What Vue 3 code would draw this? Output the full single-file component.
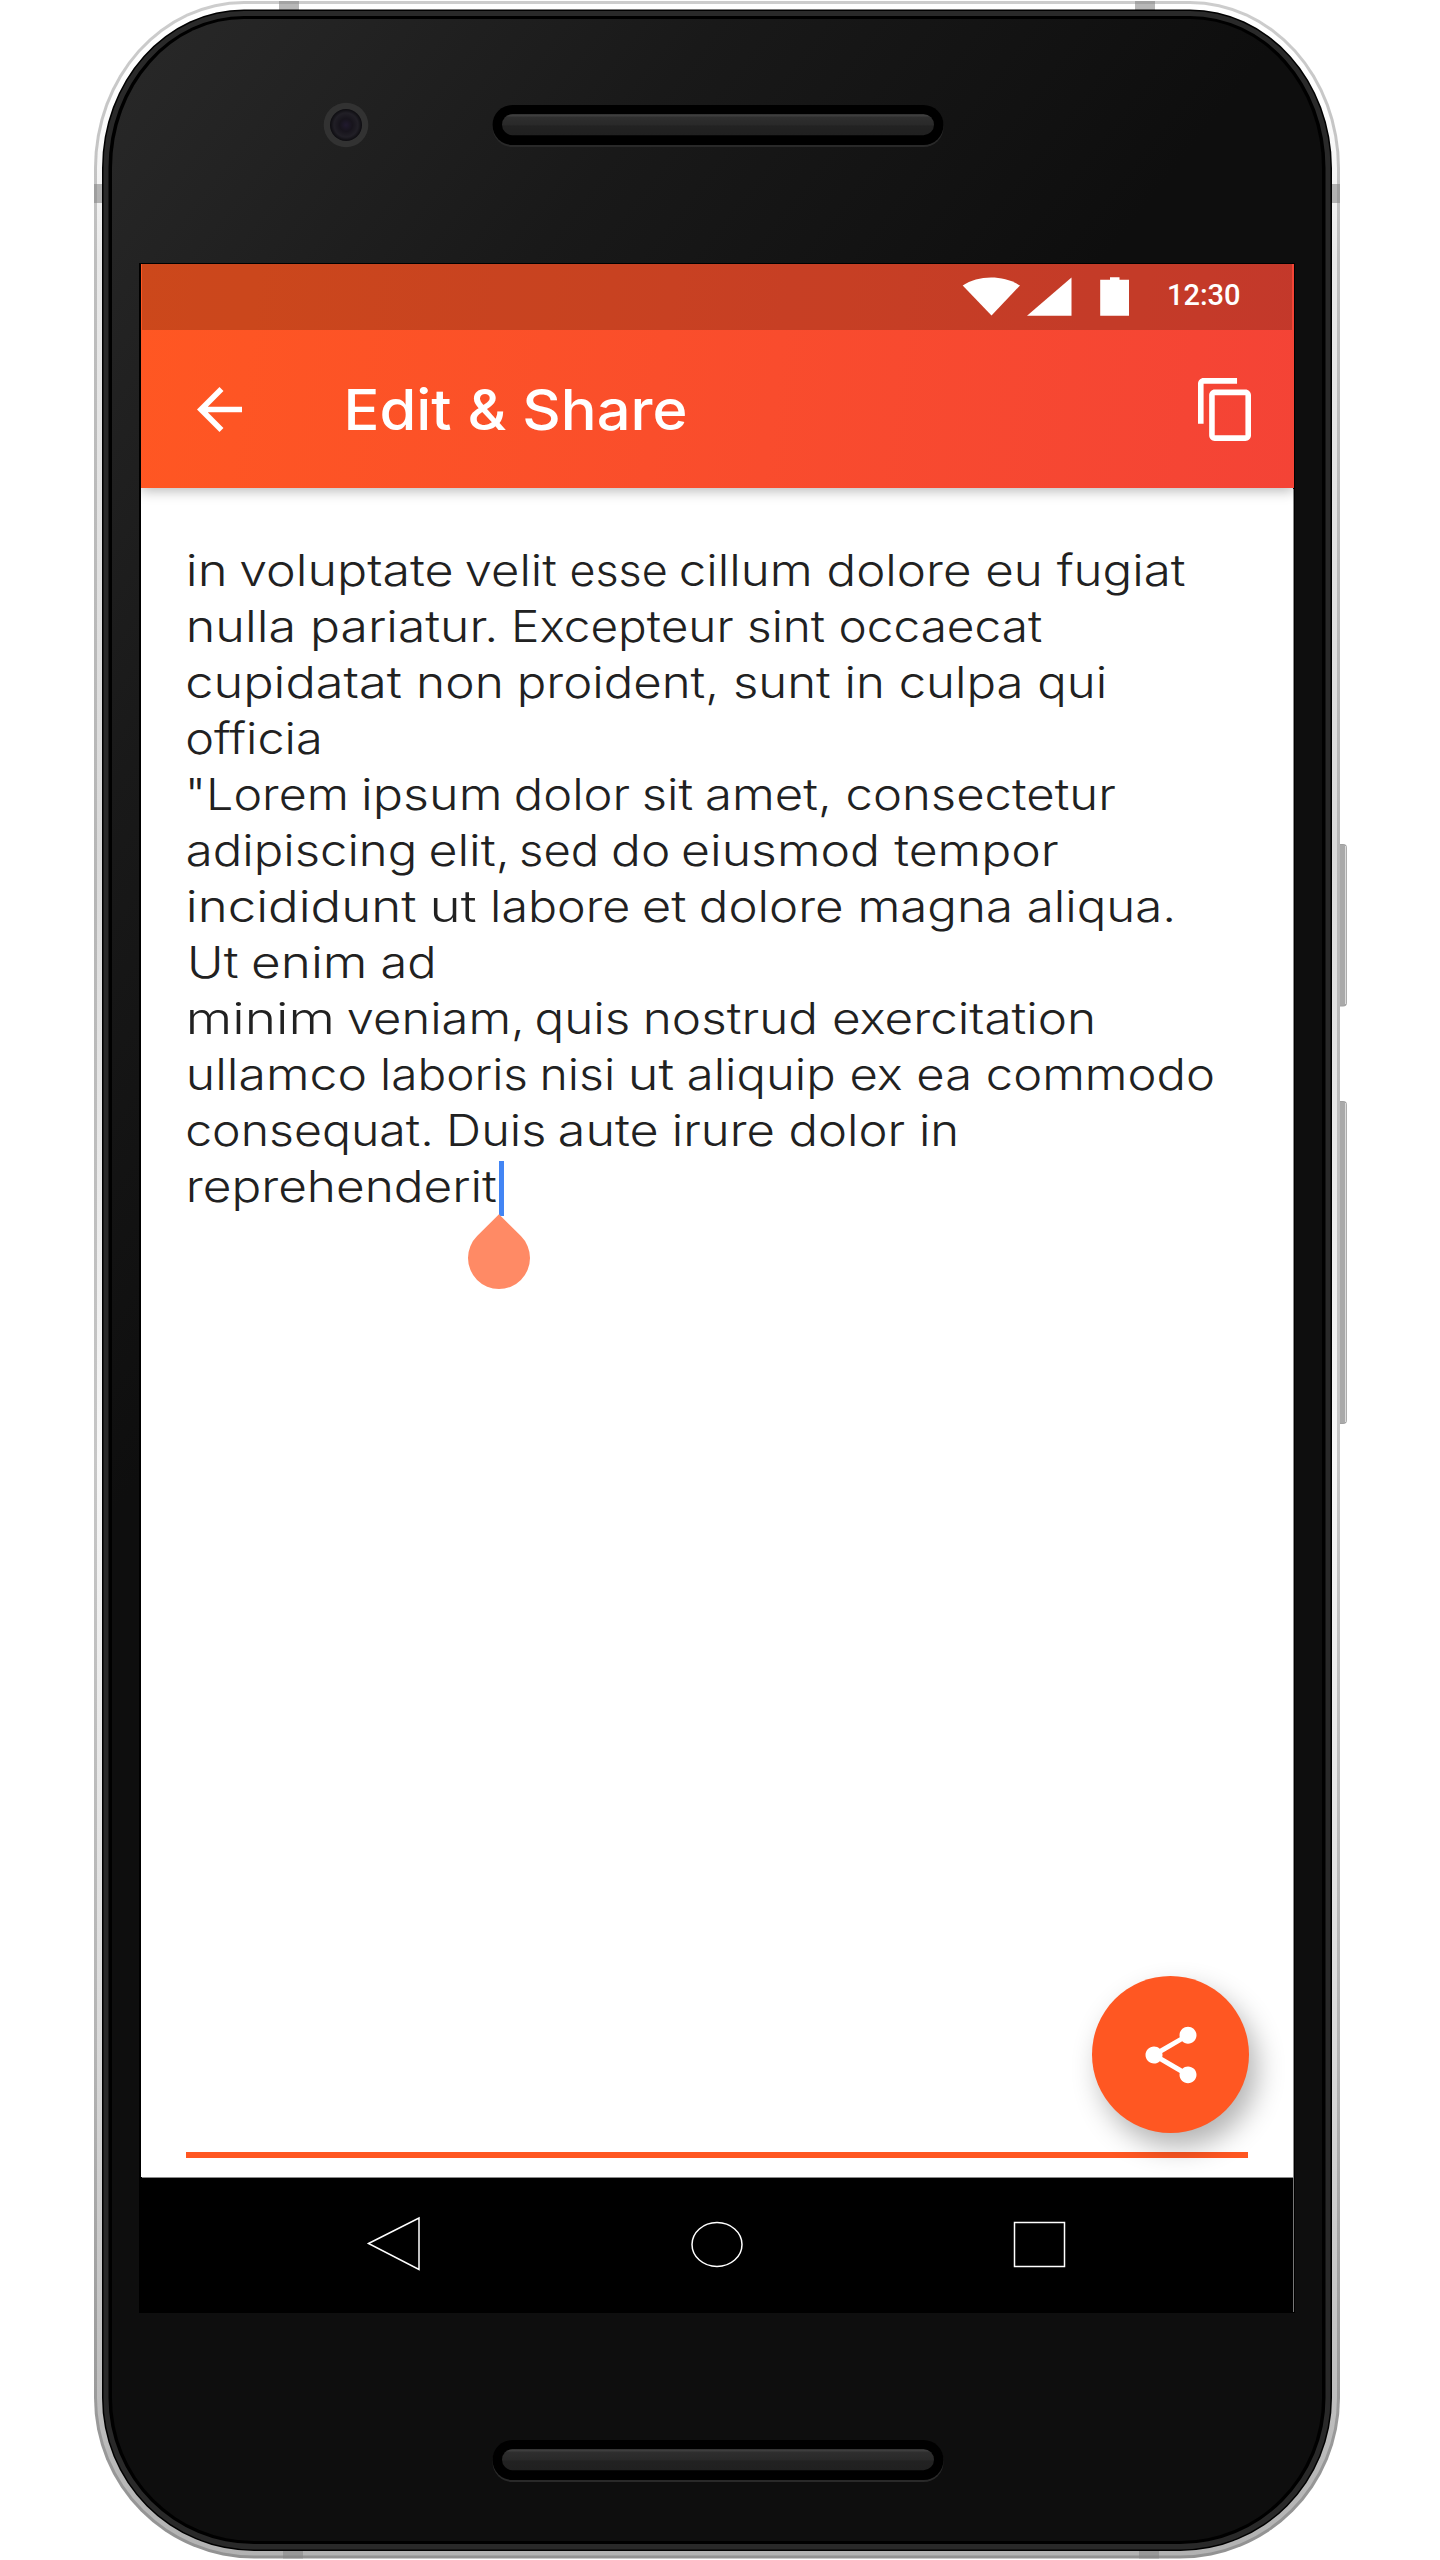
<script setup>
// Each run: [text, left ink edge, right ink edge], in thirds of a pixel
const rows = [
  [['in', 27, 133], ['voluptate', 180, 815], ['velit', 857, 1128], ['esse', 1175, 1457], ['cillum dolore eu fugiat', 1503, 3014]],
  [['nulla', 27, 342], ['pariatur.', 400, 945], ['Excepteur sint occaecat', 1003, 2584]],
  [['cupidatat', 22, 663], ['non', 718, 962], ['proident, sunt in culpa qui', 1020, 2772]],
  [['officia', 22, 422]],
  [['"Lorem', 24, 497], ['ipsum', 553, 958], ['dolor', 1008, 1348], ['sit', 1392, 1537], ['amet, consectetur', 1582, 2805]],
  [['adipiscing', 24, 702], ['elit,', 752, 980], ['sed', 1024, 1248], ['do', 1300, 1465], ['eiusmod tempor', 1510, 2634]],
  [['incididunt', 27, 707], ['ut', 758, 887], ['labore', 940, 1345], ['et', 1392, 1517], ['dolore magna aliqua.', 1563, 2979]],
  [['Ut', 31, 173], ['enim', 220, 553], ['ad', 608, 760]],
  [['minim', 27, 455], ['veniam,', 503, 1025], ['quis', 1070, 1345], ['nostrud exercitation', 1398, 2739]],
  [['ullamco', 27, 555], ['laboris', 610, 1038], ['nisi', 1088, 1296], ['ut', 1353, 1480], ['aliquip ex ea commodo', 1527, 3099]],
  [['consequat.', 22, 752], ['Duis', 808, 1093], ['aute', 1140, 1430], ['irure dolor in', 1485, 2328]],
  [['reprehenderit', 27, 948]]
]

const leftBearing = (c) => ('vt'.includes(c) ? 0.8 : 'aoecsdq'.includes(c) ? 2.2 : 3.2)
const rightBearing = (c) => ('rtv'.includes(c) ? 0.8 : 'aoecs'.includes(c) ? 2 : 3.2)

const lines = rows.map((runs) =>
  runs.map(([text, from, to]) => {
    const l = leftBearing(text[0])
    return { text, x: from / 3 - 6 - l, w: (to - from) / 3 + l + rightBearing(text.at(-1)) }
  })
)
</script>

<template>
  <div class="stage">
    <svg class="frame" viewBox="0 0 1440 2560" width="1440" height="2560">
      <defs>
        <linearGradient id="rim" x1="0" y1="0" x2="0" y2="1">
          <stop offset="0" stop-color="#cdcdcd" />
          <stop offset=".1" stop-color="#bebebe" />
          <stop offset=".35" stop-color="#b6b6b6" />
          <stop offset=".57" stop-color="#c6c6c6" />
          <stop offset=".8" stop-color="#b4b4b4" />
          <stop offset=".9" stop-color="#a0a0a0" />
          <stop offset="1" stop-color="#929292" />
        </linearGradient>
        <linearGradient id="metal" x1="0" y1="0" x2="0" y2="1">
          <stop offset="0" stop-color="#ffffff" />
          <stop offset=".04" stop-color="#fdfdfd" />
          <stop offset=".1" stop-color="#e9e9e9" />
          <stop offset=".33" stop-color="#dadada" />
          <stop offset=".57" stop-color="#f7f7f7" />
          <stop offset=".8" stop-color="#dadada" />
          <stop offset=".9" stop-color="#c6c6c6" />
          <stop offset="1" stop-color="#b2b2b2" />
        </linearGradient>
        <linearGradient id="glass" gradientUnits="userSpaceOnUse" x1="112" y1="60" x2="820" y2="620">
          <stop offset="0" stop-color="#282828" />
          <stop offset=".5" stop-color="#191919" />
          <stop offset="1" stop-color="#0e0e0e" />
        </linearGradient>
        <linearGradient id="grille" x1="0" y1="0" x2="0" y2="1">
          <stop offset="0" stop-color="#484848" />
          <stop offset=".16" stop-color="#2e2e2e" />
          <stop offset=".5" stop-color="#292929" />
          <stop offset=".56" stop-color="#222222" />
          <stop offset="1" stop-color="#202020" />
        </linearGradient>
        <radialGradient id="lens">
          <stop offset="0" stop-color="#211a2f" />
          <stop offset=".4" stop-color="#17141c" />
          <stop offset=".75" stop-color="#211f26" />
          <stop offset="1" stop-color="#0d0c10" />
        </radialGradient>
      </defs>

      <g>
        <rect x="1336" y="844" width="11" height="162.500" rx="4" fill="#a0a0a0" />
        <rect x="1336" y="845" width="9.3" height="160.500" fill="#a9a9a9" />
        <rect x="1345" y="846" width="1.2" height="158" fill="#dcdcdc" />
        <rect x="1336" y="1101" width="11" height="323" rx="4" fill="#a0a0a0" />
        <rect x="1336" y="1102" width="9.3" height="321" fill="#a9a9a9" />
        <rect x="1345" y="1103" width="1.2" height="319" fill="#dcdcdc" />
      </g>

      <path fill="url(#rim)" d="M94 168A150 167 0 0 1 244 1H1190A150 167 0 0 1 1340 168V2398A160 160.500 0 0 1 1180 2558.500H254A160 160.500 0 0 1 94 2398Z" />
      <path fill="url(#metal)" d="M97 168A147 164 0 0 1 244 4H1190A147 164 0 0 1 1337 168V2398A157 157.500 0 0 1 1180 2555.500H254A157 157.500 0 0 1 97 2398Z" />
      <g fill="#858585" fill-opacity=".58">
        <path d="M279 1h20v9h-20zM1135 1h20v9h-20zM94 184h9v19h-9zM1331 184h9v19h-9zM283 2550h20v8.500h-20zM1139 2550h20v8.500h-20z" />
      </g>
      <path fill="#000" d="M102 168A142 158.500 0 0 1 244 9.500H1190A142 158.500 0 0 1 1332 168V2398A152 153 0 0 1 1180 2551H254A152 153 0 0 1 102 2398Z" />
      <path fill="#292929" d="M103.500 168A140.500 157 0 0 1 244 11H1190A140.500 157 0 0 1 1330.500 168V2398A150.500 151.500 0 0 1 1180 2549.500H254A150.500 151.500 0 0 1 103.500 2398Z" />
      <path fill="#000" d="M108.500 168A135.500 152 0 0 1 244 16H1190A135.500 152 0 0 1 1325.500 168V2398A145.500 146 0 0 1 1180 2544H254A145.500 146 0 0 1 108.500 2398Z" />
      <path fill="url(#glass)" d="M112 168A132 149 0 0 1 244 19H1190A132 149 0 0 1 1322 168V2398A142 143 0 0 1 1180 2541H254A142 143 0 0 1 112 2398Z" />

      <circle cx="346" cy="125" r="22.300" fill="#323232" />
      <circle cx="346" cy="125" r="16" fill="url(#lens)" />

      <g v-for="y in [105, 2440]" :key="y">
        <rect x="492.500" :y="y + 1.5" width="451" height="40.500" rx="20" fill="#292929" />
        <rect x="492.500" :y="y" width="451" height="40" rx="20" />
        <rect x="502" :y="y + 9.200" width="432" height="21" rx="10.500" fill="url(#grille)" />
      </g>
    </svg>

    <main class="screen">
      <header class="top">
        <div class="status">
          <svg width="167" height="40" viewBox="0 0 167 40" fill="#fff">
            <path d="M.7 9.500C16 -1.300 42 -1.300 58 9.500L29.500 39.600Z" />
            <path d="M65 39.700H109.500V1.500Z" />
            <path d="M138.200 3.800H148V1.200H157.500V3.800H167V39.800H138.200Z" />
          </svg>
          <span class="clock">12:30</span>
        </div>
        <div class="bar">
          <svg class="back" viewBox="4 4 16 16" fill="#fff" preserveAspectRatio="none">
            <path d="M20 11H7.830l5.590-5.590L12 4l-8 8 8 8 1.410-1.410L7.830 13H20v-2z" />
          </svg>
          <svg class="title" width="360" height="80" viewBox="0 0 360 80">
            <text x="-2.500" y="60" textLength="344" lengthAdjust="spacingAndGlyphs">Edit &amp; Share</text>
          </svg>
          <svg class="copy" viewBox="2 1 19 22" fill="#fff" preserveAspectRatio="none">
            <path d="M16 1H4c-1.100 0-2 .9-2 2v14h2V3h12V1zm3 4H8c-1.100 0-2 .9-2 2v14c0 1.100.9 2 2 2h11c1.100 0 2-.9 2-2V7c0-1.100-.9-2-2-2zm0 16H8V7h11v14z" />
          </svg>
        </div>
      </header>

      <section class="editor">
        <div class="field">
          <div v-for="(runs, i) in lines" :key="i" class="line">
            <svg width="1062" height="56" viewBox="0 0 1062 56">
              <text
                v-for="(run, j) in runs"
                :key="j"
                :x="run.x"
                y="42"
                :textLength="run.w"
                lengthAdjust="spacingAndGlyphs"
              >{{ run.text }}</text>
            </svg>
            <template v-if="i === lines.length - 1">
              <i class="caret"></i>
              <i class="handle"></i>
            </template>
          </div>
        </div>
        <button class="fab" aria-label="Share">
          <svg width="68" height="68" viewBox="0 0 24 24" fill="#fff">
            <path d="M18 16.080c-.76 0-1.440.3-1.960.77L8.910 12.700c.05-.23.09-.46.09-.7s-.04-.47-.09-.7l7.050-4.110c.54.5 1.250.81 2.040.81 1.660 0 3-1.340 3-3s-1.340-3-3-3-3 1.340-3 3c0 .24.04.47.09.7L8.040 9.810C7.500 9.310 6.790 9 6 9c-1.660 0-3 1.340-3 3s1.340 3 3 3c.79 0 1.500-.31 2.040-.81l7.050 4.120c-.05.22-.09.45-.09.69 0 1.660 1.340 3 3 3s3-1.340 3-3-1.340-2.920-3-2.920z" />
          </svg>
        </button>
      </section>

      <nav class="nav">
        <svg width="56" height="60" viewBox="0 0 56 60"><path d="M2.500 28.500L53 3V54.500Z" /></svg>
        <svg width="56" height="60" viewBox="0 0 56 60"><ellipse cx="28" cy="29.500" rx="25" ry="22" /></svg>
        <svg width="56" height="60" viewBox="0 0 56 60"><rect x="3.500" y="7.500" width="50" height="44" /></svg>
      </nav>
    </main>
  </div>
</template>

<style>
body {
  background: #fff;
}
</style>

<style scoped>
.stage {
  position: relative;
  box-sizing: border-box;
  width: 1440px;
  height: 2560px;
  padding: 263px 0 0 139px;
  overflow: hidden;
  background: #fff;
}
.frame {
  position: absolute;
  inset: 0;
}
.screen {
  position: relative;
  box-sizing: border-box;
  display: flex;
  flex-direction: column;
  width: 1156px;
  height: 2050px;
  border: 1px solid #000;
  background: #000;
}
.top {
  position: relative;
  z-index: 1;
  flex: none;
  width: 1153px;
  height: 224px;
  margin-left: 1px;
  background: linear-gradient(98deg, #ff5722, #f44336);
  box-shadow: 0 3px 12px rgba(0, 0, 0, 0.28);
  clip-path: inset(0 0 -24px 0);
}
.status {
  display: flex;
  align-items: flex-start;
  box-sizing: border-box;
  width: 1150px;
  height: 66px;
  margin-left: 1px;
  padding: 12px 0 0 820px;
  background: rgba(0, 16, 0, 0.2);
}
.status svg {
  flex: none;
}
.clock {
  margin: 2px 0 0 38px;
  font: 500 29px/34px Roboto, sans-serif;
  color: #fff;
}
.bar {
  display: flex;
  align-items: center;
  height: 159px;
  padding-left: 56px;
}
.back {
  width: 45px;
  height: 45px;
}
.title {
  margin-left: 104px;
  overflow: visible;
}
.title text {
  font: 450 56px Inter, sans-serif;
  fill: #fff;
}
.copy {
  width: 53px;
  height: 63px;
  margin-left: 492px;
}
.editor {
  position: relative;
  flex: none;
  box-sizing: border-box;
  width: 1152px;
  height: 1689px;
  margin-left: 1px;
  padding: 56px 45px 0;
  background: #fff;
  box-shadow: 1px 1px 0 #8c8c8c;
}
.field {
  box-sizing: border-box;
  height: 1614px;
  border-bottom: 6px solid #ff5722;
}
.line {
  position: relative;
  height: 56px;
}
.line svg {
  display: block;
  overflow: visible;
}
.line text {
  font: 300 43.5px Inter, sans-serif;
  fill: #212121;
}
.caret {
  position: absolute;
  left: 313px;
  top: 1px;
  width: 5px;
  height: 55px;
  background: #4285f4;
}
.handle {
  position: absolute;
  left: 282px;
  top: 67px;
  width: 62px;
  height: 62px;
  background: #ff8a65;
  border-radius: 0 50% 50% 50%;
  transform: rotate(45deg);
}
.fab {
  position: absolute;
  right: 44px;
  bottom: 44px;
  display: flex;
  align-items: center;
  justify-content: center;
  width: 157px;
  height: 157px;
  padding: 0;
  border: 0;
  border-radius: 50%;
  background: #ff5722;
  box-shadow: 8px 14px 28px rgba(0, 0, 0, 0.3);
}
.nav {
  display: flex;
  flex: 1;
  align-items: center;
  justify-content: space-between;
  box-sizing: content-box;
  width: 701px;
  padding: 0 227px 0 226px;
  background: linear-gradient(#777, #777) 1153px 0 / 1px 135px no-repeat;
}
.nav svg {
  fill: none;
  stroke: #fff;
  stroke-width: 1.5;
}
</style>
